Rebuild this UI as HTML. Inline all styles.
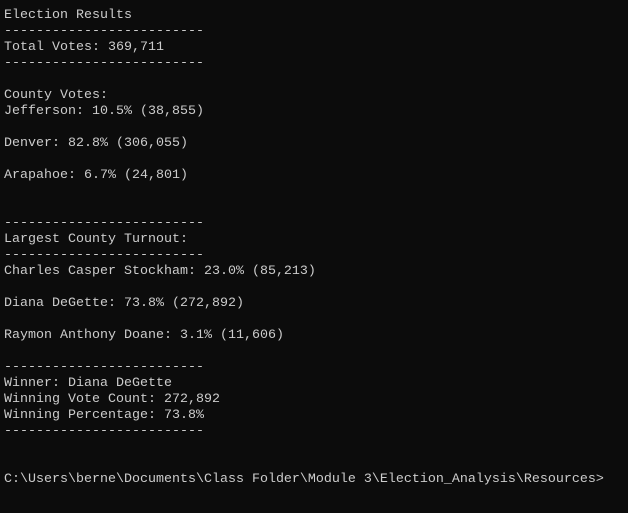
<!DOCTYPE html>
<html><head><style>
html,body{margin:0;padding:0;background:#0c0c0c;width:628px;height:513px;overflow:hidden}
pre{margin:0;position:absolute;left:4px;top:8px;font-family:"Liberation Mono",monospace;font-size:13.33px;line-height:16px;color:#cccccc;letter-spacing:0}
</style></head><body><pre>Election Results
-------------------------
Total Votes: 369,711
-------------------------

County Votes:
Jefferson: 10.5% (38,855)

Denver: 82.8% (306,055)

Arapahoe: 6.7% (24,801)


-------------------------
Largest County Turnout:
-------------------------
Charles Casper Stockham: 23.0% (85,213)

Diana DeGette: 73.8% (272,892)

Raymon Anthony Doane: 3.1% (11,606)

-------------------------
Winner: Diana DeGette
Winning Vote Count: 272,892
Winning Percentage: 73.8%
-------------------------


C:\Users\berne\Documents\Class Folder\Module 3\Election_Analysis\Resources&gt;</pre></body></html>
